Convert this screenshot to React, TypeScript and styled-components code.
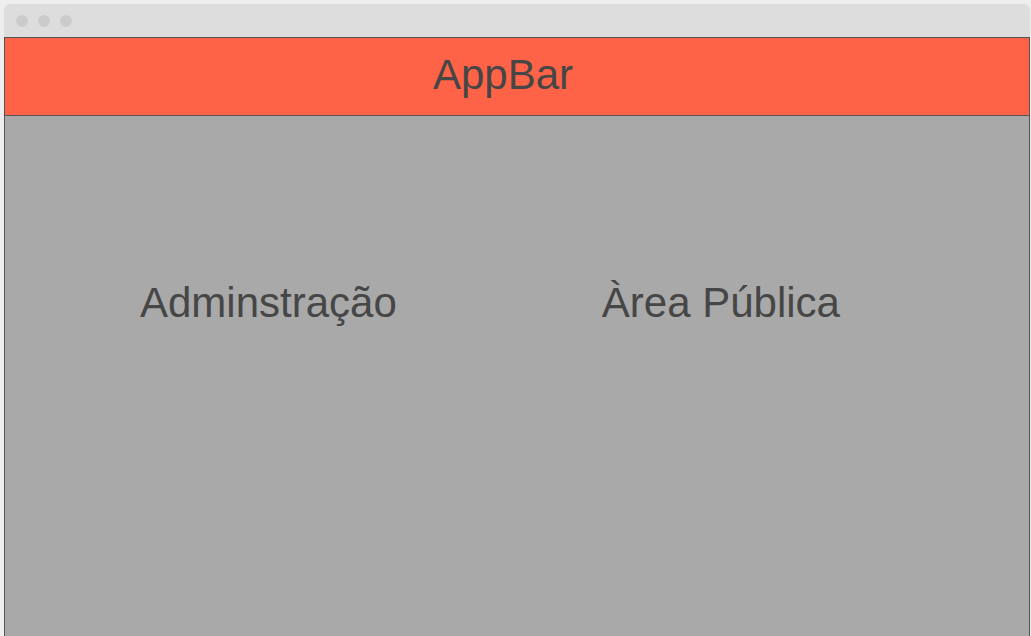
import styled, { createGlobalStyle } from 'styled-components';

const GlobalStyle = createGlobalStyle`
  html, body {
    margin: 0;
    padding: 0;
    background: #eeeeee;
    font-family: 'Liberation Sans', Arial, sans-serif;
    overflow: hidden;
  }
`;

const Window = styled.div`
  margin: 4px 0 0 4px;
  width: 1026px;
`;

const TitleBar = styled.div`
  height: 33px;
  display: flex;
  align-items: center;
  gap: 10px;
  padding-left: 12px;
  background: #dddddd;
  border-radius: 6px 6px 0 0;
`;

const Dot = styled.span`
  width: 12px;
  height: 12px;
  border-radius: 50%;
  background: #cbcbcb;
`;

const Frame = styled.div`
  border: 1px solid #555555;
  border-bottom: none;
`;

const AppBar = styled.header`
  height: 78px;
  box-sizing: border-box;
  display: flex;
  align-items: center;
  justify-content: center;
  padding: 0 28px 3px 0;
  background: #ff6347;
  border-bottom: 1px solid #555555;
  color: #464646;
  font-size: 42px;
`;

const Content = styled.main`
  min-height: 540px;
  box-sizing: border-box;
  background: #a9a9a9;
  display: flex;
  align-items: flex-start;
  gap: 205px;
  padding: 163px 0 0 135px;
`;

const Area = styled.div`
  font-size: 42px;
  line-height: 48px;
  color: #464646;
`;

const App = () => {
  return (
    <>
      <GlobalStyle />
      <Window>
        <TitleBar>
          <Dot />
          <Dot />
          <Dot />
        </TitleBar>
        <Frame>
          <AppBar>AppBar</AppBar>
          <Content>
            <Area>Adminstração</Area>
            <Area>Àrea Pública</Area>
          </Content>
        </Frame>
      </Window>
    </>
  );
};

export default App;
